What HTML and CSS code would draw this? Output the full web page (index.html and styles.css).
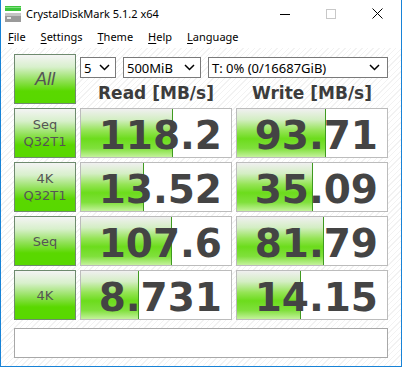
FILE: index.html
```html
<!DOCTYPE html>
<html>
<head>
    <meta charset="UTF-8">
    <title>CrystalDiskMark 5.1.2 x64</title>
    <link rel="stylesheet" href="styles.css">
</head>
<body>
    <div class="window">
        <div class="titlebar">
            <svg class="app-icon" width="16" height="16" viewBox="0 0 16 16">
                <rect x="0" y="0" width="16" height="5" fill="#3cc43c"/>
                <rect x="0" y="1" width="16" height="1" fill="#7ee27e"/>
                <rect x="0" y="7" width="16" height="9" fill="#9a9a9a"/>
                <rect x="0" y="7" width="16" height="3" fill="#c4c4c4"/>
                <rect x="2" y="11" width="4" height="2" fill="#e8e8e8"/>
            </svg>
            <span class="title">CrystalDiskMark 5.1.2 x64</span>
            <div class="controls">
                <svg width="10" height="10" viewBox="0 0 10 10"><path d="M0 5.5H10" stroke="#000" stroke-width="1"/></svg>
                <svg width="10" height="10" viewBox="0 0 10 10"><rect x="0.5" y="0.5" width="9" height="9" fill="none" stroke="#c8c8c8"/></svg>
                <svg width="11" height="11" viewBox="0 0 11 11"><path d="M0.5 0.5L10.5 10.5M10.5 0.5L0.5 10.5" stroke="#000" stroke-width="1"/></svg>
            </div>
        </div>
        <div class="menubar">
            <span><u>F</u>ile</span>
            <span><u>S</u>ettings</span>
            <span><u>T</u>heme</span>
            <span><u>H</u>elp</span>
            <span><u>L</u>anguage</span>
        </div>
        <div class="client">
            <div class="grid">
                <div class="btn all">All</div>
                <div class="top-right">
                    <div class="selects">
                        <div class="select s-count">5<svg width="11" height="7" viewBox="0 0 11 7"><path d="M1 1L5.5 5.5L10 1" fill="none" stroke="#000" stroke-width="1.5"/></svg></div>
                        <div class="select s-size">500MiB<svg width="11" height="7" viewBox="0 0 11 7"><path d="M1 1L5.5 5.5L10 1" fill="none" stroke="#000" stroke-width="1.5"/></svg></div>
                        <div class="select s-drive">T: 0% (0/16687GiB)<svg width="11" height="7" viewBox="0 0 11 7"><path d="M1 1L5.5 5.5L10 1" fill="none" stroke="#000" stroke-width="1.5"/></svg></div>
                    </div>
                    <div class="heads">
                        <div class="head">Read [MB/s]</div>
                        <div class="head">Write [MB/s]</div>
                    </div>
                </div>

                <div class="btn">Seq<br>Q32T1</div>
                <div class="value"><div class="fill" style="width: 91px"></div><span>118.2</span></div>
                <div class="value"><div class="fill" style="width: 88px"></div><span>93.71</span></div>

                <div class="btn">4K<br>Q32T1</div>
                <div class="value"><div class="fill" style="width: 62px"></div><span>13.52</span></div>
                <div class="value"><div class="fill" style="width: 75px"></div><span>35.09</span></div>

                <div class="btn">Seq</div>
                <div class="value"><div class="fill" style="width: 90px"></div><span>107.6</span></div>
                <div class="value"><div class="fill" style="width: 86px"></div><span>81.79</span></div>

                <div class="btn">4K</div>
                <div class="value"><div class="fill" style="width: 57px"></div><span>8.731</span></div>
                <div class="value"><div class="fill" style="width: 63px"></div><span>14.15</span></div>
            </div>
            <div class="comment"></div>
        </div>
    </div>
</body>
</html>
```

FILE: styles.css
```css
body {
    margin: 0;
    background-color: #ffffff;
}

.window {
    width: 402px;
    height: 367px;
    box-sizing: border-box;
    border: 1px solid #1883d7;
    border-top: none;
    display: flex;
    flex-direction: column;
    font-family: "Noto Sans", "DejaVu Sans", sans-serif;
}

.titlebar {
    height: 27px;
    display: flex;
    align-items: center;
    background-color: #ffffff;
}

.app-icon {
    margin-left: 4px;
    margin-right: 5px;
}

.title {
    font-size: 11px;
    color: #000000;
}

.controls {
    margin-left: auto;
    display: flex;
    align-items: center;
    gap: 36px;
    margin-right: 18px;
}

.menubar {
    height: 19px;
    padding-bottom: 2px;
    display: flex;
    align-items: center;
    gap: 15px;
    padding-left: 7px;
    font-size: 11px;
    color: #000000;
    background-color: #ffffff;
}

.menubar u {
    text-decoration-thickness: 1px;
    text-underline-offset: 2px;
}

.client {
    flex: 1;
    padding: 6px 13px 0 13px;
    background: repeating-linear-gradient(135deg, #ffffff 0px, #ffffff 3px, #f2f2f2 3px, #f2f2f2 4px);
}

.grid {
    display: grid;
    grid-template-columns: 62px 152px 152px;
    grid-auto-rows: 50px;
    column-gap: 4px;
    row-gap: 4px;
}

.btn {
    box-sizing: border-box;
    border: 1px solid #6e8a6e;
    background: linear-gradient(#f4f4f4 0%, #d8f0cc 25%, #8ce050 55%, #5ad800 75%, #58d800 100%);
    display: flex;
    align-items: center;
    justify-content: center;
    text-align: center;
    font-family: "DejaVu Sans", sans-serif;
    font-size: 13px;
    line-height: 17px;
    color: #555555;
}

.btn.all {
    font-size: 18px;
    font-style: italic;
    font-family: "Liberation Sans", sans-serif;
}

.top-right {
    grid-column: 2 / 4;
    display: flex;
    flex-direction: column;
}

.selects {
    display: flex;
    gap: 7px;
    margin-top: 3px;
}

.select {
    box-sizing: border-box;
    height: 21px;
    border: 1px solid #7a7a7a;
    background-color: #ffffff;
    display: flex;
    align-items: center;
    justify-content: space-between;
    padding: 0 5px 0 3px;
    font-size: 13px;
    color: #000000;
}

.s-count {
    width: 36px;
}

.s-size {
    width: 78px;
}

.s-drive {
    width: 180px;
    padding-right: 7px;
}

.heads {
    display: grid;
    grid-template-columns: 152px 152px;
    column-gap: 4px;
    margin-top: 5px;
}

.head {
    text-align: center;
    font-family: "DejaVu Sans", sans-serif;
    font-weight: bold;
    font-size: 17px;
    color: #3c3c3c;
}

.value {
    position: relative;
    box-sizing: border-box;
    border: 1px solid #bcbcbc;
    background-color: #ffffff;
    display: flex;
    align-items: center;
    justify-content: flex-end;
    padding-right: 9px;
    padding-top: 4px;
}

.fill {
    position: absolute;
    left: 0;
    top: 0;
    bottom: 0;
    border-right: 1px solid #3f9a20;
    background: linear-gradient(#f0f0f0 0%, #d4eec4 22%, #94e454 45%, #6cdc1c 62%, #80e03c 82%, #c4f29c 100%);
}

.value span {
    position: relative;
    font-family: "DejaVu Sans", sans-serif;
    font-weight: bold;
    font-size: 39px;
    line-height: 1;
    color: #444444;
}

.comment {
    box-sizing: border-box;
    height: 30px;
    margin-top: 8px;
    border: 1px solid #a8a8a8;
    background-color: #ffffff;
}
```
